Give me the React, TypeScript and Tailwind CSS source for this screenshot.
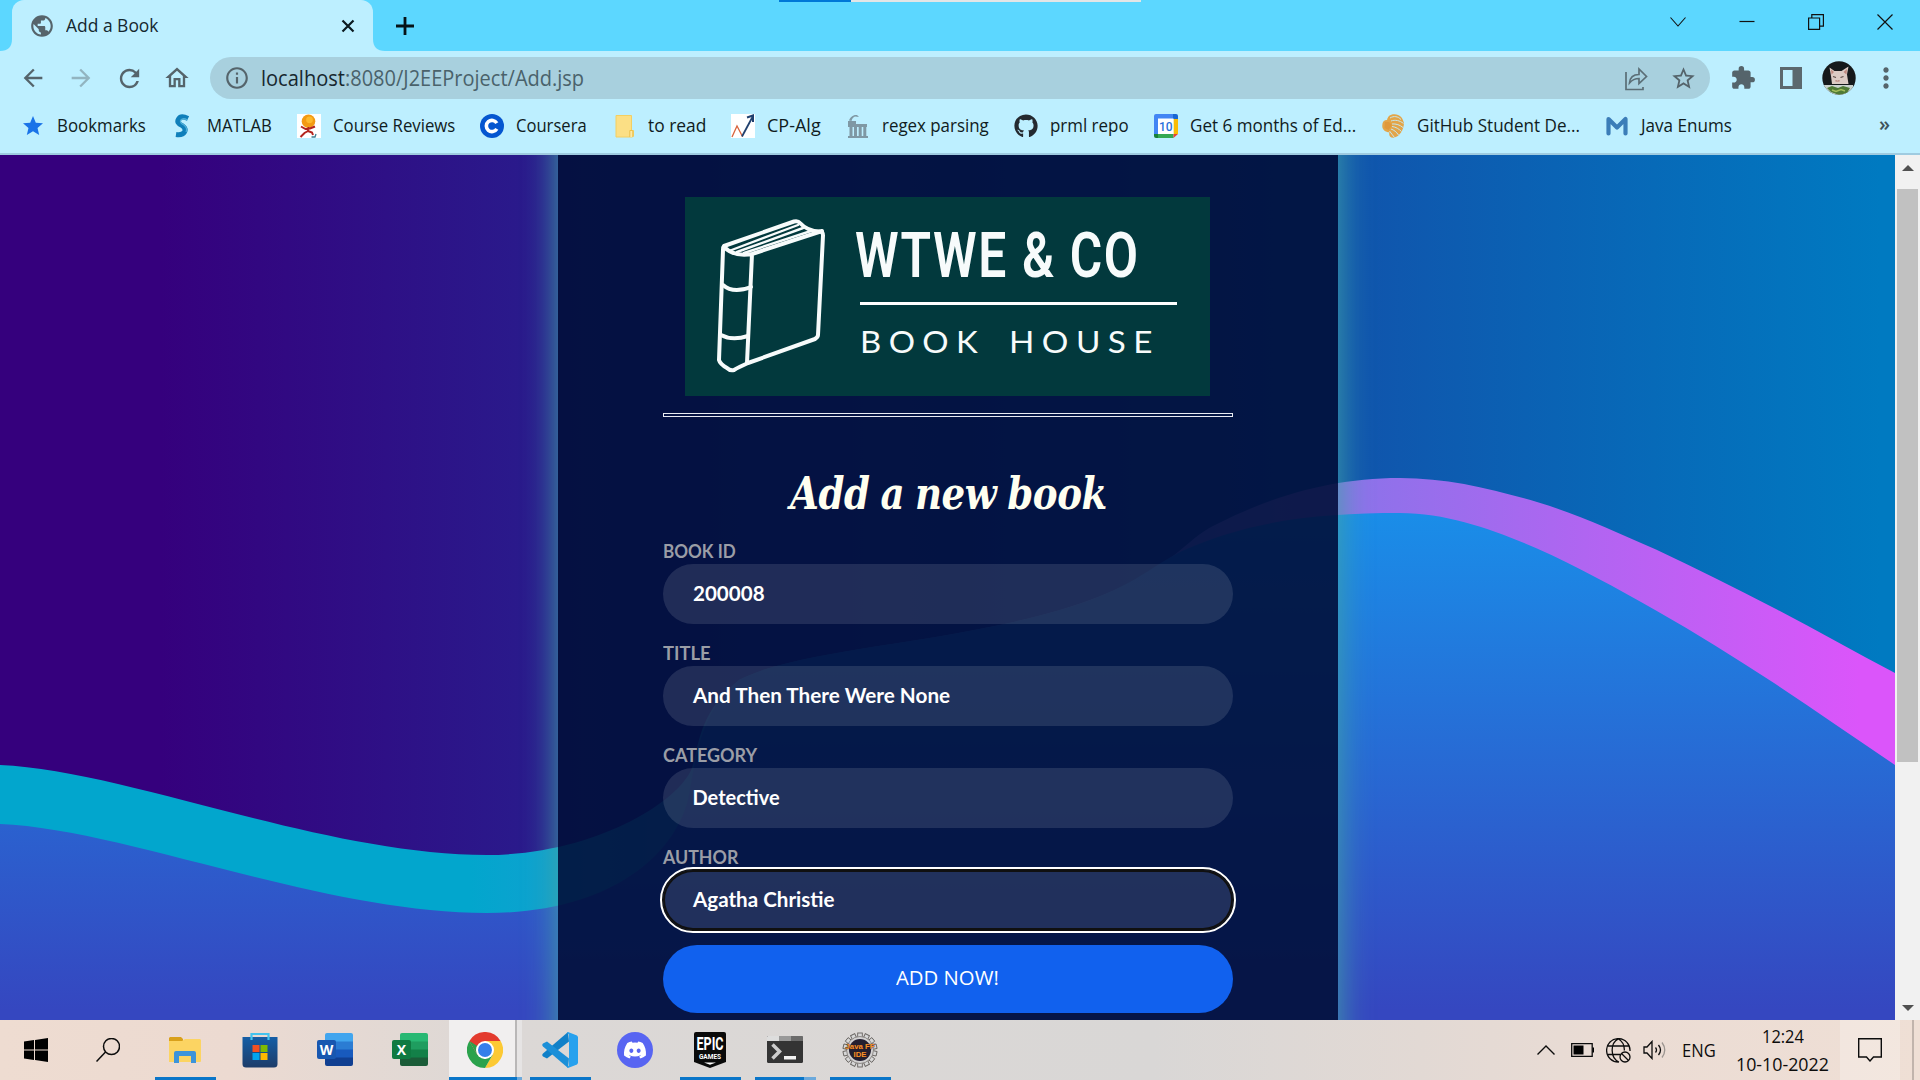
import { useLayoutEffect, useRef, useState, type ReactNode } from "react";
import { MdPublic, MdArrowBack, MdArrowForward, MdRefresh, MdOutlineHome, MdInfoOutline, MdExtension, MdStarBorder, MdMoreVert, MdStar } from "react-icons/md";
import { FaGithub, FaDiscord } from "react-icons/fa";

/* Single line of text stretched horizontally to an exact advance width. */
function Fit({ w, className = "", children }: { w: number; className?: string; children: ReactNode }) {
  const ref = useRef<HTMLSpanElement>(null);
  const [k, setK] = useState(1);
  useLayoutEffect(() => {
    if (ref.current) setK(w / ref.current.offsetWidth);
  }, [w]);
  return (
    <span className={"inline-block shrink-0 whitespace-nowrap " + className} style={{ width: w }}>
      <span ref={ref} className="inline-block origin-left" style={{ transform: `scaleX(${k})` }}>
        {children}
      </span>
    </span>
  );
}

const ui = "font-['Open_Sans',sans-serif]";

function MatlabIcon() {
  return (
    <svg viewBox="0 0 24 24" className="size-6">
      <path d="M17 4.500Q10 1 7.500 5T11 11.500Q15.500 14.500 13.500 18T5 20.500" fill="none" stroke="#0f7fba" strokeWidth="5" />
      <path d="M16.500 6Q12 3.500 10 6T13 11Q17 14.500 15 18" fill="none" stroke="#4fb0d8" strokeWidth="1.300" />
    </svg>
  );
}
function CourseIcon() {
  return (
    <svg viewBox="0 0 24 24" className="size-6">
      <path fill="#fff" d="M0 0h24v24H0z" />
      <circle cx="11.500" cy="7.300" r="6.800" fill="#f39a12" />
      <circle cx="12.500" cy="5.800" r="3.400" fill="#fdb92c" />
      <path d="M11.500 13l-.5 4-3.500 2-4 4M11 17l4 1.500 1 2.500M4 12.500l4.500 2.500 4.500-.5 5-2" fill="none" stroke="#b3251e" strokeWidth="2" />
      <path d="M14.500 23h3.500l1-3" fill="none" stroke="#3b7f94" strokeWidth="1.300" />
    </svg>
  );
}
function CourseraIcon() {
  return (
    <svg viewBox="0 0 24 24" className="size-6">
      <circle cx="12" cy="12" r="12" fill="#0556d0" />
      <path d="M16.800 9.200a5.600 5.600 0 1 0 0 5.600" fill="none" stroke="#fff" strokeWidth="3.600" />
    </svg>
  );
}
function FolderIcon() {
  return (
    <svg viewBox="0 0 24 24" className="size-6">
      <path d="M4 1.500h15.500v15H21.500V22l-1 1H4z" fill="#fbdf85" stroke="#f3cf63" strokeWidth="1" />
      <path d="M17.800 23v-6.500h3V23" fill="#fce9a6" stroke="#ecc14c" />
    </svg>
  );
}
function CpIcon() {
  return (
    <svg viewBox="0 0 24 24" className="size-6">
      <path fill="#fff" d="M0 0h24v24H0z" />
      <path d="M1 23l5-11 5.500 10.500" fill="none" stroke="#d8633c" strokeWidth="1.300" />
      <path d="M11 22.500L21.500 3" fill="none" stroke="#20406e" strokeWidth="1.800" />
      <path d="M16 3.500l6-2v6.500" fill="none" stroke="#20406e" strokeWidth="2" />
    </svg>
  );
}
function ColumnIcon() {
  return (
    <svg viewBox="0 0 24 24" className="size-6" fill="#7f98a4">
      <path d="M3 6.500c1-3 4-6 8-5.500l2 2-4-.5C7 3 6 5 5.500 7z" />
      <path d="M2 7h8v3h11v3H2zM2 22h20v2H2z" />
      <path d="M3.500 13h3v9h-3zM8 13h3v9H8zM12.700 13h3v9h-3zM17.300 13h3v9h-3z" />
    </svg>
  );
}
function CalendarIcon() {
  return (
    <svg viewBox="0 0 24 24" className="size-6">
      <path fill="#4285f4" d="M2 0h17v5H4v15H0V2a2 2 0 0 1 2-2z" />
      <path fill="#1967d2" d="M19 0h3a2 2 0 0 1 2 2v3h-5z" />
      <path fill="#fbbc04" d="M19.500 5H24v15h-4.500z" />
      <path fill="#34a853" d="M4 20h15.500v4H4z" />
      <path fill="#188038" d="M0 20h4v4H2a2 2 0 0 1-2-2z" />
      <path fill="#ea4335" d="M19.500 20H24l-4.500 4z" />
      <path fill="#fff" d="M4 4.500h15.500V20H4z" />
      <text x="11.700" y="16.700" textAnchor="middle" fontFamily="Roboto" fontSize="12" fontWeight="500" fill="#2a6fdb">10</text>
    </svg>
  );
}
function LionIcon() {
  return (
    <svg viewBox="0 0 24 24" className="size-6">
      <path d="M12 .3c6-.8 10 3 11 9-.3 6-4 13.500-10.500 14.500-3.500.2-5-3-4-5.500C4 18 1 15 1.300 12 1 8 3 6 6 6c1-4 3-5 6-5.700z" fill="#e3a548" />
      <path d="M9 4c4-2.500 8-1.500 11 1.500M10 7c4-1.500 9-.5 12.500 2.500M11 10c4-.5 8 1 11 3.500M11 12.500c4 .5 7 2.500 9.500 5M10 15c3 1 5.500 3 7.500 6M8.500 17c1.500 2 3 4 5 6.500" fill="none" stroke="#c6e8ee" strokeWidth="1" />
      <path d="M4 8l4 0 3 3-3.500 5L3.500 14z" fill="#e0993a" />
    </svg>
  );
}
function MIcon() {
  return (
    <svg viewBox="0 0 24 24" className="size-6">
      <path d="M3.500 19.500V5l8.500 8.500L20.500 5v14.500" fill="none" stroke="#3b7db8" strokeWidth="4.200" strokeLinejoin="round" strokeLinecap="round" />
    </svg>
  );
}

const bookmarks: { label: string; w: number; icon: ReactNode }[] = [
  { label: "Bookmarks", w: 89, icon: <MdStar className="size-6 text-[#1a73e8]" /> },
  { label: "MATLAB", w: 65, icon: <MatlabIcon /> },
  { label: "Course Reviews", w: 122, icon: <CourseIcon /> },
  { label: "Coursera", w: 71, icon: <CourseraIcon /> },
  { label: "to read", w: 58, icon: <FolderIcon /> },
  { label: "CP-Alg", w: 54, icon: <CpIcon /> },
  { label: "regex parsing", w: 107, icon: <ColumnIcon /> },
  { label: "prml repo", w: 79, icon: <FaGithub className="size-6 text-[#24292f]" /> },
  { label: "Get 6 months of Ed...", w: 166, icon: <CalendarIcon /> },
  { label: "GitHub Student De...", w: 163, icon: <LionIcon /> },
  { label: "Java Enums", w: 91, icon: <MIcon /> },
];

function TabStrip() {
  return (
    <div className="relative flex h-[51px] bg-[#5cd7ff]">
      <div className="absolute left-[779px] top-0 flex h-0.5 w-[362px] bg-[#e3e5e6]">
        <div className="w-[72px] bg-[#0078d7]" />
      </div>
      <svg viewBox="0 0 12 51" className="h-[51px] w-3"><path d="M0 51c8 0 12-4 12-12v12z" fill="#bdefff" /></svg>
      <div className="flex w-[361px] items-center rounded-t-xl bg-[#bdefff] pl-[17px]">
        <MdPublic className="size-[26px] text-[#56646b]" />
        <Fit w={93} className="-mt-0.5 ml-[11px] text-lg text-[#15272f]">Add a Book</Fit>
        <svg viewBox="0 0 14 14" className="ml-auto mr-[18px] size-3.5"><path d="M1.500 1.500l11 11m0-11l-11 11" stroke="#0c1a20" strokeWidth="2.200" /></svg>
      </div>
      <svg viewBox="0 0 12 51" className="h-[51px] w-3"><path d="M12 51C4 51 0 47 0 39v12z" fill="#bdefff" /></svg>
      <svg viewBox="0 0 18 18" className="ml-[11px] mt-[17px] size-[18px]"><path d="M9 0v18M0 9h18" stroke="#061318" strokeWidth="2.800" /></svg>
      <div className="ml-auto mt-[14px] flex h-4 gap-[53px] pr-[27px]">
        <svg viewBox="0 0 16 16" className="size-4"><path d="M.5 3.500L8 12l7.500-8.500" fill="none" stroke="#111" strokeWidth="1.100" /></svg>
        <svg viewBox="0 0 16 16" className="size-4"><path d="M.5 7.500h15" stroke="#111" strokeWidth="1.200" /></svg>
        <svg viewBox="0 0 16 16" className="size-4"><path d="M.6 4h11v11.400H.6zM3.800 4V.7h11.600v11.500h-3.800" fill="none" stroke="#111" strokeWidth="1.200" /></svg>
        <svg viewBox="0 0 16 16" className="size-4"><path d="M.5.5l15 15m0-15l-15 15" stroke="#111" strokeWidth="1.200" /></svg>
      </div>
    </div>
  );
}

function Toolbar() {
  return (
    <div className="flex h-[54px] items-center pl-[19px] text-[#55646b]">
      <MdArrowBack className="size-[28px]" />
      <MdArrowForward className="ml-5 size-[28px] text-[#92b4c0]" />
      <MdRefresh className="ml-5 size-[29px]" />
      <MdOutlineHome className="ml-[19px] size-[28px]" />
      <div className="ml-[19px] flex h-[42px] w-[1500px] items-center rounded-full bg-[#a8d0de] pl-[14px] pr-[13px]">
        <MdInfoOutline className="size-[26px]" />
        <Fit w={84} className="ml-[11px] mt-0.5 text-[21px] text-[#17272e]">localhost</Fit>
        <Fit w={239} className="mt-0.5 text-[21px] text-[#4a626b]">:8080/J2EEProject/Add.jsp</Fit>
        <svg viewBox="0 0 24 26" className="ml-auto mr-[22px] h-[26px] w-6" fill="none" stroke="#5b6e76" strokeWidth="1.700">
          <path d="M2 7v17.500h17V22" />
          <path d="M5.500 18c.5-6 4-8.500 9.500-8.500V4l7.500 7.500L15 18.500V13.500c-4.500 0-7 1.500-9.500 4.500z" />
        </svg>
        <MdStarBorder className="size-[27px]" />
      </div>
      <MdExtension className="ml-5 size-[26px]" />
      <svg viewBox="0 0 22 22" className="ml-[24px] size-[22px]"><path fill="#5b686e" d="M0 0h22v22H0z" /><path fill="#bdefff" d="M3 3h9.500v16H3z" /></svg>
      <svg viewBox="0 0 34 34" className="ml-5 size-[34px]">
        <clipPath id="avatar"><circle cx="17" cy="17" r="16.700" /></clipPath>
        <g clipPath="url(#avatar)">
          <path fill="#15191b" d="M0 0h34v34H0z" />
          <path d="M7.500 6.500l5 3.500h7l7-4.500-1.500 8 1.500 9.500H10l-1-8z" fill="#dccbc4" />
          <path d="M9 8.500l3 2.500-2.500 2.500zM25 8l-3.500 3 3 2.500z" fill="#c0897f" />
          <path d="M11 15.500l3 1M18.500 16.500l3-1" stroke="#5b4b45" strokeWidth="1.200" />
          <path d="M13.500 19l2 .8 2-.8v1.500h-4z" fill="#b3766f" />
          <path d="M2 24h29v10H2z" fill="#c9d2cd" />
          <path d="M5 27l5-2 6 2 5-2 7 2-3 5-8 2-8-3z" fill="#4f7a35" />
          <path d="M10 29l4 1.500 5-2 4 1.500" stroke="#a3bd5a" strokeWidth="1.500" fill="none" />
        </g>
      </svg>
      <MdMoreVert className="ml-[14px] size-[32px]" />
    </div>
  );
}

function BookmarkBar() {
  return (
    <div className="flex h-[50px] items-center border-b-2 border-[#9fcbe0] pl-[21px] pr-[30px] pb-[6px]">
      <div className="flex gap-[25px]">
        {bookmarks.map((b) => (
          <div key={b.label} className="flex items-center gap-3">
            <span className="size-6">{b.icon}</span>
            <Fit w={b.w} className="-mt-[3px] text-lg leading-6 text-[#101c22]">{b.label}</Fit>
          </div>
        ))}
      </div>
      <span className="ml-auto pb-1 text-[20px] font-semibold leading-6 text-[#40525a]">»</span>
    </div>
  );
}

function Waves() {
  return (
    <svg viewBox="0 155 1895 865" className="absolute inset-0 h-full w-full" preserveAspectRatio="none">
      <defs>
        <linearGradient id="sky" gradientUnits="userSpaceOnUse" x1="160" x2="1880" y1="0" y2="0">
          <stop offset="0" stopColor="#35007d" />
          <stop offset="1" stopColor="#007ac1" />
        </linearGradient>
        <linearGradient id="sea" gradientUnits="userSpaceOnUse" x1="0" x2="0" y1="515" y2="1010">
          <stop offset="0" stopColor="#1a8de8" />
          <stop offset="1" stopColor="#3547c0" />
        </linearGradient>
        <linearGradient id="ribbon" gradientUnits="userSpaceOnUse" x1="470" x2="1860" y1="0" y2="0">
          <stop offset="0" stopColor="#02a6cd" />
          <stop offset="1" stopColor="#db55fa" />
        </linearGradient>
      </defs>
      <path d="M0 155h1895v865H0z" fill="url(#sky)" />
      <path
        d="M0 765C125 770 322 855 487 855C590 855 678 804 692 768C700 740 700 712 739 680C800 648 940 645 1060 610C1175 575 1180 540 1219 523C1265 500 1325 478 1400 478C1448 478 1492 489 1537 502C1577 514 1616 532 1656 549.5C1696 568 1735 588 1774 608C1814 629 1855 652 1895 673V1020H0z"
        fill="url(#ribbon)"
      />
      <path
        d="M0 824C125 829 322 913 487 913C605 913 672 860 688 800C696 758 700 712 739 680C800 648 940 645 1060 610C1130 590 1150 567 1180 552C1250 520 1320 513 1400 513C1448 513 1494 530 1537 548.5C1577 566 1616 588 1656 610.5C1696 633 1735 658 1774 683C1815 710 1855 738 1895 765V1020H0z"
        fill="url(#sea)"
      />
    </svg>
  );
}

function Logo() {
  return (
    <div className="-ml-[1px] mt-[42px] flex h-[199px] w-[525px] bg-[#02393d] pl-[29px] text-[#f7fbfb]">
      <svg viewBox="30 18 115 162" className="mt-[18px] h-[162px] w-[115px]" fill="none" stroke="#f7fbfb" strokeWidth="4" strokeLinecap="round" strokeLinejoin="round">
        <path d="M40 49L110 24.500q4-1 6 1.500q7 8 20 8.500q3 0 3 4L134 138q0 2-3 4L64 166q-9 4-14 7q-4 1-7-2q-7-4-8-8L39 53q0-3 1-4z" />
        <path d="M40 50q10 10 28 7L138 34M68 57L63 166" />
        <path d="M39 88q10 9 28 2M37 138q11 6 27 1" />
        <path d="M45 54L114 28M53 55L119 31M60 56L127 34" strokeWidth="2.400" />
      </svg>
      <div className="ml-[28px] flex flex-col">
        <Fit w={285} className="-ml-0.5 mt-[26px] h-[66px] font-['Roboto'] text-[63px] font-semibold leading-[66px] tracking-[2px]">WTWE &amp; CO</Fit>
        <div className="ml-[3px] mt-[12.500px] h-[3.500px] w-[317px] bg-white" />
        <div className="mt-4 flex font-['Lato'] text-[31px] leading-10">
          <Fit w={125} className="ml-[3px] tracking-[7px]">BOOK</Fit>
          <Fit w={151} className="ml-[24px] tracking-[7px]">HOUSE</Fit>
        </div>
      </div>
    </div>
  );
}

const fields = [
  { label: "BOOK ID", lw: 73, value: "200008", vw: 72 },
  { label: "TITLE", lw: 48, value: "And Then There Were None", vw: 257 },
  { label: "CATEGORY", lw: 94, value: "Detective", vw: 87 },
  { label: "AUTHOR", lw: 75, value: "Agatha Christie", vw: 142, focus: true },
];

function Card() {
  return (
    <div className="relative flex h-full w-[780px] flex-col items-center bg-[rgba(1,16,58,0.9)]">
      <Logo />
      <div className="mt-[17px] h-1 w-[570px] border border-[#e8ebf2]" />
      <Fit w={317} className="mt-[47px] h-[60px] font-['DejaVu_Serif'] text-[44px] font-bold italic leading-[60px] text-[#fffff0] [word-spacing:-2px] tracking-[-0.5px]">Add a new book</Fit>
      <form className="flex w-[570px] flex-col pt-[14px]">
        {fields.map((f) => (
          <div key={f.label} className="flex h-[102px] flex-col">
            <Fit w={f.lw} className="h-[26px] font-['Lato'] text-[18px] font-bold leading-[26px] text-[#9a9da6]">{f.label}</Fit>
            <div
              className={
                "flex h-[60px] items-center rounded-full bg-white/[0.115] pl-[29.500px] " +
                (f.focus ? "outline-[2.500px] outline-offset-[1px] outline-white ring-[1.500px] ring-[#101010] shadow-[inset_0_0_0_2px_#101010]" : "")
              }
            >
              <Fit w={f.vw} className="-mt-0.5 font-['Lato'] text-[20px] font-bold leading-7 text-white">{f.value}</Fit>
            </div>
          </div>
        ))}
        <div className="-mt-[1px] flex h-[68px] items-center justify-center rounded-full bg-[#1161ee]">
          <Fit w={103} className="-ml-0.5 -mt-[3px] font-['Open_Sans'] text-[20.500px] font-medium text-white">ADD NOW!</Fit>
        </div>
      </form>
    </div>
  );
}

function Page() {
  return (
    <div className="flex h-[865px]">
      <main className="relative flex w-[1895px] overflow-hidden pl-[558px]">
        <Waves />
        <div className="relative">
          <div className="pointer-events-none absolute -bottom-10 -left-10 -top-10 w-10 overflow-hidden"><div className="ml-10 h-full w-[780px] shadow-[0_0_32px_rgb(64,165,165)]" /></div>
          <div className="pointer-events-none absolute -bottom-10 left-[780px] -top-10 w-10 overflow-hidden"><div className="-ml-[780px] h-full w-[780px] shadow-[0_0_32px_rgb(64,165,165)]" /></div>
          <Card />
        </div>
      </main>
      <div className="flex w-[25px] flex-col items-center bg-[#f1f1f1]">
        <svg viewBox="0 0 12 6" className="mt-[10px] h-1.5 w-3"><path d="M0 6l6-6 6 6z" fill="#505050" /></svg>
        <div className="mt-[18px] h-[573px] w-[21px] bg-[#c1c1c1]" />
        <svg viewBox="0 0 12 6" className="mb-[9px] mt-auto h-1.5 w-3"><path d="M0 0l6 6 6-6z" fill="#505050" /></svg>
      </div>
    </div>
  );
}

function Office({ letter, c }: { letter: string; c: string[] }) {
  return (
    <svg viewBox="0 0 36 34" className="h-[34px] w-9">
      <path fill={c[0]} d="M10 0h24a2 2 0 0 1 2 2v7H8V2a2 2 0 0 1 2-2z" />
      <path fill={c[1]} d="M8 8.500h28V17H8z" />
      <path fill={c[2]} d="M8 16.500h28V25H8z" />
      <path fill={c[3]} d="M8 24.500h28V31a2 2 0 0 1-2 2H10a2 2 0 0 1-2-2z" />
      <rect y="7" width="19" height="19" rx="2" fill={c[4]} />
      <text x="9.500" y="21.700" textAnchor="middle" fontFamily="Open Sans" fontWeight="700" fontSize="14" fill="#fff">{letter}</text>
    </svg>
  );
}

const gearTeeth = Array.from({ length: 14 }, (_, i) => (i * 360) / 14);

const apps: { id: string; bar?: string; icon: ReactNode }[] = [
  {
    id: "files", bar: "plain",
    icon: (
      <svg viewBox="0 0 32 28" className="mt-0.5 h-7 w-8">
        <path d="M1 0h11l2 2v5H0V1z" fill="#d9a01b" />
        <path d="M0 4h13l3-2h15l1 1v21a1 1 0 0 1-1 1H0z" fill="#fcd462" />
        <path d="M5 26V16a2 2 0 0 1 2-2h18a2 2 0 0 1 2 2v10h-5v-7H10v7z" fill="#3d94da" />
      </svg>
    ),
  },
  {
    id: "store",
    icon: (
      <svg viewBox="0 0 36 36" className="size-9">
        <defs><linearGradient id="bag" x2="0" y2="1"><stop stopColor="#145ea6" /><stop offset="1" stopColor="#1d3c69" /></linearGradient></defs>
        <path d="M.5 5h35v27a3.500 3.500 0 0 1-3.500 3.500H4A3.500 3.500 0 0 1 .5 32z" fill="url(#bag)" />
        <path d="M9.500 8V2h17v6" fill="none" stroke="#43c3ee" strokeWidth="2.200" />
        <path fill="#f25022" d="M10.500 13h7v7h-7z" /><path fill="#7fba00" d="M18.500 13h7v7h-7z" />
        <path fill="#00a4ef" d="M10.500 21h7v7h-7z" /><path fill="#ffb900" d="M18.500 21h7v7h-7z" />
      </svg>
    ),
  },
  { id: "word", icon: <Office letter="W" c={["#41a5ee", "#2b7cd3", "#185abd", "#103f91", "#1857b0"]} /> },
  { id: "excel", icon: <Office letter="X" c={["#27b873", "#1f9d5f", "#138048", "#1b5c38", "#0f7a41"]} /> },
  {
    id: "chrome", bar: "active",
    icon: (
      <svg viewBox="0 0 48 48" className="size-9">
        <path d="M3.200 12A24 24 0 0 1 44.800 12H24z" fill="#e33b2e" />
        <path d="M44.800 12A24 24 0 0 1 24 48L34.400 30 24 12z" fill="#fcc934" />
        <path d="M24 48A24 24 0 0 1 3.200 12L13.600 30 24 36l10.400-6z" fill="#2ba24c" />
        <path d="M3.200 12L13.600 30 24 24V12z" fill="#e33b2e" />
        <path d="M3.200 12L13.600 30 19 22z" fill="#2ba24c" />
        <circle cx="24" cy="24" r="12" fill="#fff" /><circle cx="24" cy="24" r="9.300" fill="#347fea" />
      </svg>
    ),
  },
  {
    id: "code", bar: "plain",
    icon: (
      <svg viewBox="0 0 36 36" className="size-9">
        <path d="M27 9.500L5 26.500 1 24.500q-1.500-1.500 0-3L26 0z" fill="#1080c8" />
        <path d="M27 26.500L5 9.500 1 11.500q-1.500 1.500 0 3L26 36z" fill="#1b8fd8" />
        <path d="M26 0l9 3.500 1 1.500v26l-1 1.500L26 36l-1-1 2-1.500v-31L25 1z" fill="#27a1ee" />
      </svg>
    ),
  },
  {
    id: "discord",
    icon: <span className="flex size-9 items-center justify-center rounded-full bg-[#5865f2]"><FaDiscord className="size-6 text-white" /></span>,
  },
  {
    id: "epic", bar: "plain",
    icon: (
      <svg viewBox="0 0 32 36" className="h-9 w-8">
        <path d="M2 0h28a2 2 0 0 1 2 2v28L16 36 0 30V2a2 2 0 0 1 2-2z" fill="#0a0a0a" />
        <g transform="translate(16 0) scale(.72 1)">
          <text y="18.500" textAnchor="middle" fontFamily="Roboto" fontWeight="700" fontSize="17.500" fill="#fff">EPIC</text>
        </g>
        <text x="16" y="26.500" textAnchor="middle" fontFamily="Roboto" fontWeight="700" fontSize="6.500" fill="#fff">GAMES</text>
        <path d="M10 30.500h12l-6 2.300z" fill="#fff" />
      </svg>
    ),
  },
  {
    id: "terminal", bar: "split",
    icon: (
      <svg viewBox="0 0 36 28" className="h-7 w-9">
        <rect width="36" height="27" rx="1.500" fill="#343434" />
        <path fill="#ddd" d="M1 0h11v5H0V1z" /><path fill="#999" d="M12 0h12v5H12z" /><path fill="#6b6b6b" d="M24 0h11l1 1v4H24z" />
        <path d="M5.500 8.500l7 7-7 7" fill="none" stroke="#ccc" strokeWidth="3.500" />
        <path d="M17 20h12v3.500H17z" fill="#f2f2f2" />
      </svg>
    ),
  },
  {
    id: "java", bar: "plain",
    icon: (
      <svg viewBox="0 0 36 36" className="size-9">
        {gearTeeth.map((a) => (
          <rect key={a} x="15.700" y="1" width="4.600" height="6" fill="#d7d7d7" stroke="#66625f" strokeWidth=".9" transform={`rotate(${a} 18 18)`} />
        ))}
        <circle cx="18" cy="18" r="13.500" fill="#d2d1d1" stroke="#7d7875" strokeWidth=".8" />
        <circle cx="18" cy="18" r="11" fill="#241f30" />
        <g fontFamily="Liberation Sans" fontWeight="700" fontSize="7.800" fill="#f9902c" stroke="#3a1e10" strokeWidth=".6" paintOrder="stroke">
          <text x="18" y="16.500" textAnchor="middle">Java FF</text>
          <text x="18" y="25" textAnchor="middle">IDE</text>
        </g>
      </svg>
    ),
  },
];

function Taskbar() {
  return (
    <div className="flex h-[60px] bg-[linear-gradient(90deg,#eedcd1_0%,#ecdad1_12%,#dcd8d6_26%,#d9d7d6_60%,#e2d9d4_74%,#ebdcd4_85%,#efdfd5_100%)] text-[#0c0c0c]">
      <div className="flex w-[72px] items-center justify-center">
        <svg viewBox="0 0 24 24" className="size-6"><path d="M0 3.500l10-1.400v9.400H0zM11 2l13-2v11.500H11zM0 12.500h10V22L0 20.500zM11 12.500h13V24l-13-1.900z" /></svg>
      </div>
      <div className="flex w-[75px] items-center justify-center pr-[3px]">
        <svg viewBox="0 0 24 24" className="size-6" fill="none" stroke="#0c0c0c" strokeWidth="1.500"><circle cx="15.500" cy="8.500" r="8" /><path d="M9.500 14L.5 23.500" /></svg>
      </div>
      {apps.map((a) => (
        <div key={a.id} className={"relative flex w-[75px] items-center justify-center " + (a.bar === "active" ? "bg-[linear-gradient(90deg,transparent_2px,#f1efef_2px,#f1efef_68px,#b9b7b7_68px,#b9b7b7_70px,#e6e4e4_70px,#e6e4e4_75px)]" : "")}>
          {a.icon}
          {a.bar === "plain" && <div className="absolute bottom-0 left-2 h-[3px] w-[61px] bg-[#0a76c9]" />}
          {a.bar === "active" && <div className="absolute bottom-0 left-0.5 h-[3px] w-[73px] border-r-[5px] border-[#6ba9dc] bg-[#0a76c9]" />}
          {a.bar === "split" && <div className="absolute bottom-0 left-2 h-[3px] w-[61px] border-r-[12px] border-[#6ba9dc] bg-[#0a76c9]" />}
        </div>
      ))}
      <div className="ml-auto flex items-center">
        <svg viewBox="0 0 18 10" className="h-2.5 w-[18px]"><path d="M.5 9.500L9 1l8.500 8.500" fill="none" stroke="#0c0c0c" strokeWidth="1.400" /></svg>
        <svg viewBox="0 0 23 14" className="ml-4 h-3.5 w-[23px]"><path d="M.7.700h20.500v12.600H.7z" fill="none" stroke="#0c0c0c" strokeWidth="1.300" /><path d="M2.500 2.500h10v9h-10zM21.500 4.500H23v5h-1.500z" /></svg>
        <svg viewBox="0 0 25 25" className="ml-3 size-[25px]" fill="none" stroke="#0c0c0c" strokeWidth="1.300">
          <path d="M13 24A11.700 11.700 0 1 1 24 13M13 24C4 20 4 5 12.300 .8C17.500 4 18.500 9 18.300 12.500M2 8h21M2 16.500h12" />
          <circle cx="19" cy="19" r="5" /><path d="M15.500 15.500l7 7" />
        </svg>
        <svg viewBox="0 0 24 20" className="ml-3 h-5 w-6" fill="none" stroke="#0c0c0c" strokeWidth="1.300"><path d="M1 7h3l5-5.500v17L4 13H1zM12.500 7.500q2 2.500 0 5M15.500 5q4 5 0 10" /><path d="M19 2.500q5.500 7.500 0 15" stroke="#9c9590" /></svg>
        <Fit w={34} className="ml-[15px] text-[18px]">ENG</Fit>
        <div className="ml-[20px] flex w-[93px] flex-col items-center">
          <Fit w={42} className="h-7 text-[18px] leading-7">12:24</Fit>
          <Fit w={93} className="h-7 text-[18px] leading-7">10-10-2022</Fit>
        </div>
        <div className="ml-[11px] flex h-[60px] w-[60px] items-center justify-center bg-white/25">
          <svg viewBox="0 0 24 24" className="size-6"><path d="M.7.700h22.600v18.300H15.500L12 23 8.500 19H.7z" fill="none" stroke="#0c0c0c" strokeWidth="1.400" /></svg>
        </div>
        <div className="ml-3 mr-1.5 h-[60px] w-0.5 bg-[#c1b4ac]" />
      </div>
    </div>
  );
}

export default function App() {
  return (
    <div className={"h-[1080px] w-[1920px] overflow-hidden bg-[#bdefff] " + ui}>
      <TabStrip />
      <Toolbar />
      <BookmarkBar />
      <Page />
      <Taskbar />
    </div>
  );
}
